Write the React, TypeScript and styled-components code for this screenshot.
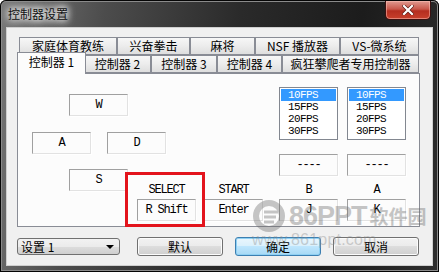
import React from "react";
import styled, { createGlobalStyle } from "styled-components";

const Global = createGlobalStyle`
  html, body { margin: 0; padding: 0; background: #fff; }
  body { font-family: "Noto Sans CJK SC", "Noto Sans", sans-serif; }
`;

const Window = styled.div`
  position: relative;
  width: 439px;
  height: 272px;
  box-sizing: border-box;
  display: flex;
  flex-direction: column;
  padding: 0 7px 7px 7px;
  background: linear-gradient(100deg, #7a7a7a 0%, #4c4c4c 22%, #2a2a2a 50%, #1c1c1c 75%, #2e2e2e 100%);
  box-shadow: inset 0 0 0 1px #050505, inset 0 0 0 2px #8a8a8a;
  border-radius: 6px 6px 0 0;
  overflow: hidden;
`;

const TitleBar = styled.div`
  height: 28px;
  display: flex;
  align-items: flex-start;
`;

const Title = styled.div`
  margin: 7px 0 0 1px;
  font-size: 12px;
  line-height: 14px;
  color: #111;
  text-shadow: 0 0 6px #fff, 0 0 8px #fff, 0 0 10px #eee;
`;

const CloseButton = styled.div`
  margin: 1px 1px 0 auto;
  width: 46px;
  height: 19px;
  box-sizing: border-box;
  border: 1px solid #3a1010;
  border-top: none;
  border-radius: 0 0 5px 5px;
  background: linear-gradient(#e09a90 0%, #c9584b 45%, #b52e20 55%, #c8402c 100%);
  box-shadow: inset 0 0 0 1px rgba(255, 200, 190, 0.5);
  display: flex;
  align-items: center;
  justify-content: center;
`;

const Client = styled.div`
  flex: 1;
  background: #f0f0f0;
  box-shadow: 0 0 0 1px #cfcfcf;
  padding: 9px 12px 0 10px;
  display: flex;
  flex-direction: column;
`;

const TabControl = styled.div`
  width: 403px;
  display: flex;
  flex-direction: column;
`;

const TabRow = styled.div`
  height: 18px;
  display: flex;
  align-items: flex-end;
  padding-left: 2px;
`;

const Tab = styled.div<{ $w: number; $active?: boolean }>`
  position: relative;
  width: ${(p) => p.$w}px;
  height: ${(p) => (p.$active ? 22 : 18)}px;
  box-sizing: border-box;
  border: 1px solid #898c95;
  border-bottom: ${(p) => (p.$active ? "none" : "1px solid #898c95")};
  margin: ${(p) => (p.$active ? "0 -2px -1px -2px" : "0")};
  z-index: ${(p) => (p.$active ? 2 : 1)};
  background: ${(p) =>
    p.$active ? "#fcfcfc" : "linear-gradient(#f7f7f7 0%, #ececec 50%, #dedede 100%)"};
  display: flex;
  align-items: ${(p) => (p.$active ? "flex-start" : "center")};
  padding-top: ${(p) => (p.$active ? "2px" : "0")};
  justify-content: center;
  font-size: 12px;
  line-height: 14px;
  color: #000;
  white-space: nowrap;
`;

const Page = styled.div`
  position: relative;
  height: 154px;
  box-sizing: border-box;
  border: 1px solid #898c95;
  background: #fcfcfc;
  padding: 13px 0 0 14px;
  display: flex;
  align-items: flex-start;
`;

const LeftPart = styled.div`
  width: 231px;
  margin-top: 7px;
  display: flex;
  flex-direction: column;
`;

const KeyRow = styled.div<{ $top?: number; $indent?: number; $gap?: number }>`
  display: flex;
  align-items: flex-start;
  margin-top: ${(p) => p.$top ?? 0}px;
  padding-left: ${(p) => p.$indent ?? 0}px;
  gap: ${(p) => p.$gap ?? 16}px;
`;

const mono = `"Liberation Mono", "DejaVu Sans Mono", monospace`;

const KeyBox = styled.div`
  width: 59px;
  height: 22px;
  box-sizing: border-box;
  border-style: solid;
  border-width: 1px;
  border-color: #a0a0a0 #e2e2e2 #e2e2e2 #a0a0a0;
  box-shadow: 1px 1px 0 #fff;
  display: flex;
  align-items: center;
  justify-content: center;
  font-family: ${mono};
  font-size: 12px;
  letter-spacing: -1.2px;
  color: #000;
  white-space: pre;
`;

const KeyGroup = styled.div<{ $left: number }>`
  margin-left: ${(p) => p.$left}px;
  margin-top: 15px;
  display: flex;
  flex-direction: column;
  gap: 3px;
`;

const Label = styled.div`
  width: 59px;
  height: 12px;
  line-height: 12px;
  text-align: center;
  font-family: ${mono};
  font-size: 12px;
  letter-spacing: -1.2px;
  color: #000;
`;

const RightPart = styled.div`
  margin-left: 16px;
  display: flex;
  gap: 9px;
`;

const PadColumn = styled.div`
  display: flex;
  flex-direction: column;
`;

const ListBox = styled.div`
  width: 59px;
  height: 53px;
  box-sizing: border-box;
  border: 1px solid #828790;
  background: #fff;
  padding: 1px;
`;

const ListItem = styled.div<{ $sel?: boolean }>`
  height: 12px;
  line-height: 12px;
  padding-left: 7px;
  font-family: ${mono};
  font-size: 11px;
  letter-spacing: -0.6px;
  background: ${(p) => (p.$sel ? "#3399ff" : "transparent")};
  color: ${(p) => (p.$sel ? "#fff" : "#000")};
`;

const Spacer = styled.div<{ $h: number }>`
  height: ${(p) => p.$h}px;
  flex: none;
`;

const Highlight = styled.div`
  position: absolute;
  left: 107px;
  top: 98px;
  width: 80px;
  height: 55px;
  box-sizing: border-box;
  border: 3px solid #e3141c;
  pointer-events: none;
`;

const BottomBar = styled.div`
  margin-top: 10px;
  height: 19px;
  display: flex;
  align-items: flex-start;
`;

const Combo = styled.div`
  width: 103px;
  height: 17px;
  margin-top: 1px;
  box-sizing: border-box;
  border: 1px solid #707070;
  border-radius: 3px;
  background: linear-gradient(#f2f2f2 0%, #ebebeb 50%, #dddddd 50%, #cfcfcf 100%);
  display: flex;
  align-items: center;
  padding: 0 5px 0 3px;
  font-size: 12px;
  color: #000;
`;

const ComboText = styled.span`
  flex: 1;
  line-height: 14px;
`;

const Arrow = styled.span`
  width: 0;
  height: 0;
  border-left: 4px solid transparent;
  border-right: 4px solid transparent;
  border-top: 4px solid #000;
`;

const Button = styled.div<{ $left: number; $focus?: boolean }>`
  width: 86px;
  height: 19px;
  margin-left: ${(p) => p.$left}px;
  box-sizing: border-box;
  border: 1px solid ${(p) => (p.$focus ? "#3c7fb1" : "#707070")};
  border-radius: 3px;
  background: ${(p) =>
    p.$focus
      ? "linear-gradient(#eaf6fd 0%, #d9f0fc 50%, #bee6fd 50%, #a7d9f5 100%)"
      : "linear-gradient(#f2f2f2 0%, #ebebeb 50%, #dddddd 50%, #cfcfcf 100%)"};
  box-shadow: ${(p) => (p.$focus ? "inset 0 0 0 1px #8fd0f3" : "inset 0 0 0 1px #fcfcfc")};
  display: flex;
  align-items: center;
  justify-content: center;
  font-size: 12px;
  line-height: 14px;
  color: #000;
`;

const Watermark = styled.div`
  position: absolute;
  left: 252px;
  top: 199px;
  pointer-events: none;
  opacity: 0.38;
  display: flex;
  flex-direction: column;
  white-space: nowrap;
`;

const WmTop = styled.div`
  display: flex;
  align-items: center;
  gap: 3px;
`;

const WmBig = styled.span`
  font-family: "Liberation Sans", Arial, sans-serif;
  font-weight: bold;
  font-size: 27px;
  line-height: 30px;
  color: #6a6a6a;
  letter-spacing: -1px;
`;

const WmCn = styled.span`
  font-family: "Noto Sans CJK SC", sans-serif;
  font-weight: bold;
  font-size: 19px;
  line-height: 30px;
  color: #6a6a6a;
`;

const WmUrl = styled.div`
  margin: -2px 0 0 0;
  font-family: "Liberation Sans", Arial, sans-serif;
  font-size: 16px;
  line-height: 18px;
  color: #8a8a8a;
  letter-spacing: 0.2px;
`;

const fps = ["10FPS", "15FPS", "20FPS", "30FPS"];

function Pad({ label, value }: { label: string; value: string }) {
  return (
    <PadColumn>
      <ListBox>
        {fps.map((f, i) => (
          <ListItem key={f} $sel={i === 0}>
            {f}
          </ListItem>
        ))}
      </ListBox>
      <Spacer $h={14} />
      <KeyBox>----</KeyBox>
      <Spacer $h={8} />
      <Label>{label}</Label>
      <Spacer $h={3} />
      <KeyBox>{value}</KeyBox>
    </PadColumn>
  );
}

export default function App() {
  const row1: [string, number][] = [
    ["家庭体育教练", 98],
    ["兴奋拳击", 73],
    ["麻将", 65],
    ["NSF 播放器", 85],
    ["VS-微系统", 79],
  ];
  const row2: [string, number][] = [
    ["控制器 1", 69],
    ["控制器 2", 67],
    ["控制器 3", 66],
    ["控制器 4", 65],
    ["疯狂攀爬者专用控制器", 137],
  ];
  return (
    <>
      <Global />
      <Window>
        <TitleBar>
          <Title>控制器设置</Title>
          <CloseButton>
            <svg width="12" height="10" viewBox="0 0 12 10">
              <path d="M2 1 L10 9 M10 1 L2 9" stroke="#5a1a14" strokeWidth="3.4" strokeLinecap="square" />
              <path d="M2 1 L10 9 M10 1 L2 9" stroke="#fff" strokeWidth="2.2" strokeLinecap="square" />
            </svg>
          </CloseButton>
        </TitleBar>
        <Client>
          <TabControl>
            <TabRow>
              {row1.map(([t, w]) => (
                <Tab key={t} $w={w}>
                  {t}
                </Tab>
              ))}
            </TabRow>
            <TabRow>
              {row2.map(([t, w], i) => (
                <Tab key={t} $w={w} $active={i === 0}>
                  {t}
                </Tab>
              ))}
            </TabRow>
            <Page>
              <LeftPart>
                <KeyRow $indent={37}>
                  <KeyBox>W</KeyBox>
                </KeyRow>
                <KeyRow $top={16}>
                  <KeyBox>A</KeyBox>
                  <KeyBox>D</KeyBox>
                </KeyRow>
                <KeyRow $top={15} $indent={37} $gap={0}>
                  <KeyBox>S</KeyBox>
                  <KeyGroup $left={9}>
                    <Label>SELECT</Label>
                    <KeyBox>R Shift</KeyBox>
                  </KeyGroup>
                  <KeyGroup $left={8}>
                    <Label>START</Label>
                    <KeyBox>Enter</KeyBox>
                  </KeyGroup>
                </KeyRow>
              </LeftPart>
              <RightPart>
                <Pad label="B" value="J" />
                <Pad label="A" value="K" />
              </RightPart>
              <Highlight />
            </Page>
          </TabControl>
          <BottomBar>
            <Combo>
              <ComboText>设置 1</ComboText>
              <Arrow />
            </Combo>
            <Button $left={17}>默认</Button>
            <Button $left={12} $focus>
              确定
            </Button>
            <Button $left={12}>取消</Button>
          </BottomBar>
        </Client>
        <Watermark>
          <WmTop>
            <svg width="34" height="34" viewBox="0 0 34 34">
              <circle cx="17" cy="17" r="13" fill="none" stroke="#6a6a6a" strokeWidth="6" />
              <path d="M12 13 H26 M12 18 H24 M12 23 H22" stroke="#6a6a6a" strokeWidth="3" />
            </svg>
            <WmBig>86PPT</WmBig>
            <WmCn>软件园</WmCn>
          </WmTop>
          <WmUrl>www.861ppt.com</WmUrl>
        </Watermark>
      </Window>
    </>
  );
}
